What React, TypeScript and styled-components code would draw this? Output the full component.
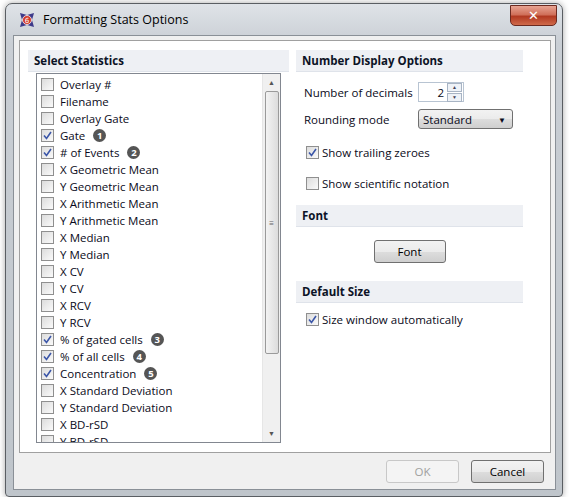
import React from "react";
import styled, { createGlobalStyle } from "styled-components";

const Global = createGlobalStyle`
  html, body { margin: 0; padding: 0; background: #fff; }
  body { font-family: "Open Sans", "Noto Sans", sans-serif; font-size: 11.5px; color: #000; }
`;

const Frame = styled.div`
  margin: 3px 0 0 5px;
  width: 558px;
  height: 494px;
  box-sizing: border-box;
  border: 1px solid #5a5e63;
  border-radius: 7px 7px 4px 4px;
  background: linear-gradient(180deg, #dfe3e8 0%, #c9ced4 8%, #bfc5cb 100%);
  box-shadow: 0 0 6px rgba(0,0,0,0.35);
  display: flex;
  flex-direction: column;
  padding: 0 6px 6px 7px;
`;

const TitleBar = styled.div`
  height: 31px;
  display: flex;
  align-items: center;
  gap: 8px;
  padding-left: 6px;
  position: relative;
  font-family: "Open Sans", sans-serif;
  font-size: 12.5px;
  color: #000;
`;

const CloseBtn = styled.div`
  position: absolute;
  right: -1px;
  top: 1px;
  width: 45px;
  height: 19px;
  border: 1px solid #6b2a20;
  border-radius: 0 0 5px 5px;
  background: linear-gradient(180deg, #e8a493 0%, #d0705a 45%, #b23a22 55%, #cf6a4a 100%);
  display: flex;
  align-items: center;
  justify-content: center;
  color: #fff;
  font-weight: bold;
  font-size: 13px;
  font-family: "DejaVu Sans", sans-serif;
`;

const Client = styled.div`
  flex: 1;
  background: #f0f0f0;
  border: 1px solid #8a9097;
  display: flex;
  flex-direction: column;
`;

const Pane = styled.div`
  margin: 4px 4px 0 5px;
  height: 413px;
  background: #fff;
  border: 1px solid #a0a0a0;
  display: grid;
  grid-template-columns: 261px 227px;
  column-gap: 7px;
  padding: 9px 0 0 8px;
  box-sizing: border-box;
`;

const Column = styled.div`
  display: flex;
  flex-direction: column;
`;

const Header = styled.div`
  height: 22px;
  background: #eef0f4;
  border-bottom: 1px solid #dfe3ea;
  box-sizing: border-box;
  display: flex;
  align-items: center;
  padding-left: 6px;
  font-weight: 700;
  font-size: 11.5px;
  color: #0c1326;
`;

const ListBox = styled.div`
  margin: 1px 8px 0 8px;
  height: 370px;
  border: 1px solid #828790;
  box-sizing: border-box;
  display: flex;
  overflow: hidden;
`;

const Items = styled.div`
  flex: 1;
  padding: 2px 0 0 4px;
`;

const Item = styled.div`
  height: 17px;
  display: flex;
  align-items: center;
  gap: 6px;
  white-space: nowrap;
  color: #0a0a20;
`;

const Box = styled.span`
  width: 11px;
  height: 11px;
  border: 1px solid #8f8f8f;
  background: linear-gradient(135deg, #dcdcdc, #fafafa);
  display: inline-flex;
  align-items: center;
  justify-content: center;
  flex: none;
`;

const Badge = styled.span`
  width: 13px;
  height: 13px;
  border-radius: 50%;
  background: #555;
  color: #fff;
  font-size: 9.5px;
  font-weight: 700;
  display: inline-flex;
  align-items: center;
  justify-content: center;
  margin-left: 2px;
`;

const ScrollBar = styled.div`
  width: 17px;
  background: #f0f0f0;
  border-left: 1px solid #e6e6e6;
  display: flex;
  flex-direction: column;
  align-items: center;
`;

const Arrow = styled.div`
  height: 17px;
  display: flex;
  align-items: center;
  justify-content: center;
  font-size: 7px;
  color: #555;
`;

const Thumb = styled.div`
  width: 14px;
  height: 263px;
  border: 1px solid #9a9a9a;
  border-radius: 2px;
  box-sizing: border-box;
  background: linear-gradient(90deg, #f3f3f3, #dcdcdc);
  display: flex;
  align-items: center;
  justify-content: center;
  font-size: 8px;
  color: #666;
`;

const Track = styled.div`flex: 1;`;

const Field = styled.div<{ $mt?: number }>`
  display: flex;
  align-items: center;
  padding-left: 8px;
  margin-top: ${(p) => p.$mt ?? 0}px;
  color: #0a0a20;
`;

const Label = styled.span`
  width: 114px;
`;

const Spin = styled.div`
  width: 46px;
  height: 20px;
  border: 1px solid #b8c4d2;
  box-sizing: border-box;
  display: flex;
  align-items: center;
  justify-content: flex-end;
  gap: 3px;
  padding-right: 1px;
`;

const SpinBtns = styled.div`
  display: flex;
  flex-direction: column;
  gap: 1px;
`;

const SpinBtn = styled.div`
  width: 13px;
  height: 7px;
  border: 1px solid #a8b4c4;
  background: #eef2f7;
  font-size: 5px;
  color: #445;
  display: flex;
  align-items: center;
  justify-content: center;
`;

const Select = styled.div`
  width: 95px;
  height: 20px;
  box-sizing: border-box;
  border: 1px solid #707070;
  border-radius: 3px;
  background: linear-gradient(180deg, #f2f2f2 0%, #ebebeb 50%, #dddddd 51%, #cfcfcf 100%);
  display: flex;
  align-items: center;
  justify-content: space-between;
  padding: 0 6px 0 4px;
`;

const Check = styled.div<{ $mt: number }>`
  display: flex;
  align-items: center;
  gap: 3px;
  padding-left: 10px;
  margin-top: ${(p) => p.$mt}px;
  color: #0a0a20;
`;

const Button = styled.div<{ $disabled?: boolean; $w: number }>`
  width: ${(p) => p.$w}px;
  height: 23px;
  box-sizing: border-box;
  border: 1px solid ${(p) => (p.$disabled ? "#c8c8c8" : "#707070")};
  border-radius: 3px;
  background: ${(p) =>
    p.$disabled ? "#f4f4f4" : "linear-gradient(180deg, #f2f2f2 0%, #ebebeb 50%, #dddddd 51%, #cfcfcf 100%)"};
  color: ${(p) => (p.$disabled ? "#a0a0a0" : "#000")};
  display: flex;
  align-items: center;
  justify-content: center;
`;

const Center = styled.div`
  display: flex;
  justify-content: center;
  margin: 13px 0 18px;
`;

const Spacer = styled.div`
  height: 14px;
`;

const Footer = styled.div`
  flex: 1;
  display: flex;
  justify-content: flex-end;
  align-items: center;
  gap: 12px;
  padding-right: 11px;
`;

const Tick = () => (
  <svg width="9" height="9" viewBox="0 0 9 9">
    <path d="M1 4.5 L3.5 7.5 L8 1" fill="none" stroke="#3b56a8" strokeWidth="1.6" />
  </svg>
);

const CB = ({ on }: { on?: boolean }) => <Box>{on && <Tick />}</Box>;

const stats: [string, boolean, number?][] = [
  ["Overlay #", false],
  ["Filename", false],
  ["Overlay Gate", false],
  ["Gate", true, 1],
  ["# of Events", true, 2],
  ["X Geometric Mean", false],
  ["Y Geometric Mean", false],
  ["X Arithmetic Mean", false],
  ["Y Arithmetic Mean", false],
  ["X Median", false],
  ["Y Median", false],
  ["X CV", false],
  ["Y CV", false],
  ["X RCV", false],
  ["Y RCV", false],
  ["% of gated cells", true, 3],
  ["% of all cells", true, 4],
  ["Concentration", true, 5],
  ["X Standard Deviation", false],
  ["Y Standard Deviation", false],
  ["X BD-rSD", false],
  ["Y BD-rSD", false],
];

export default function App() {
  return (
    <>
      <Global />
      <Frame>
        <TitleBar>
          <svg width="16" height="16" viewBox="0 0 16 16">
            <path d="M1 1 L8 3 L15 1 L13 8 L15 15 L8 13 L1 15 L3 8 Z" fill="#3d3a8a" />
            <circle cx="8" cy="8" r="4.5" fill="#d23a2a" stroke="#fff" strokeWidth="0.8" />
            <text x="8" y="10.8" fontSize="7" fill="#fff" textAnchor="middle" fontFamily="DejaVu Sans">6</text>
          </svg>
          Formatting Stats Options
          <CloseBtn>✕</CloseBtn>
        </TitleBar>
        <Client>
          <Pane>
            <Column>
              <Header>Select Statistics</Header>
              <ListBox>
                <Items>
                  {stats.map(([t, on, n]) => (
                    <Item key={t}>
                      <CB on={on} />
                      {t}
                      {n && <Badge>{n}</Badge>}
                    </Item>
                  ))}
                </Items>
                <ScrollBar>
                  <Arrow>▲</Arrow>
                  <Thumb>≡</Thumb>
                  <Track />
                  <Arrow>▼</Arrow>
                </ScrollBar>
              </ListBox>
            </Column>
            <Column>
              <Header>Number Display Options</Header>
              <Field $mt={10}>
                <Label>Number of decimals</Label>
                <Spin>
                  2
                  <SpinBtns>
                    <SpinBtn>▲</SpinBtn>
                    <SpinBtn>▼</SpinBtn>
                  </SpinBtns>
                </Spin>
              </Field>
              <Field $mt={7}>
                <Label>Rounding mode</Label>
                <Select>
                  Standard
                  <span style={{ fontSize: 8 }}>▼</span>
                </Select>
              </Field>
              <Check $mt={16}>
                <CB on /> Show trailing zeroes
              </Check>
              <Check $mt={16}>
                <CB /> Show scientific notation
              </Check>
              <Spacer />
              <Header>Font</Header>
              <Center>
                <Button $w={72}>Font</Button>
              </Center>
              <Header>Default Size</Header>
              <Check $mt={9}>
                <CB on /> Size window automatically
              </Check>
            </Column>
          </Pane>
          <Footer>
            <Button $disabled $w={73}>OK</Button>
            <Button $w={73}>Cancel</Button>
          </Footer>
        </Client>
      </Frame>
    </>
  );
}
